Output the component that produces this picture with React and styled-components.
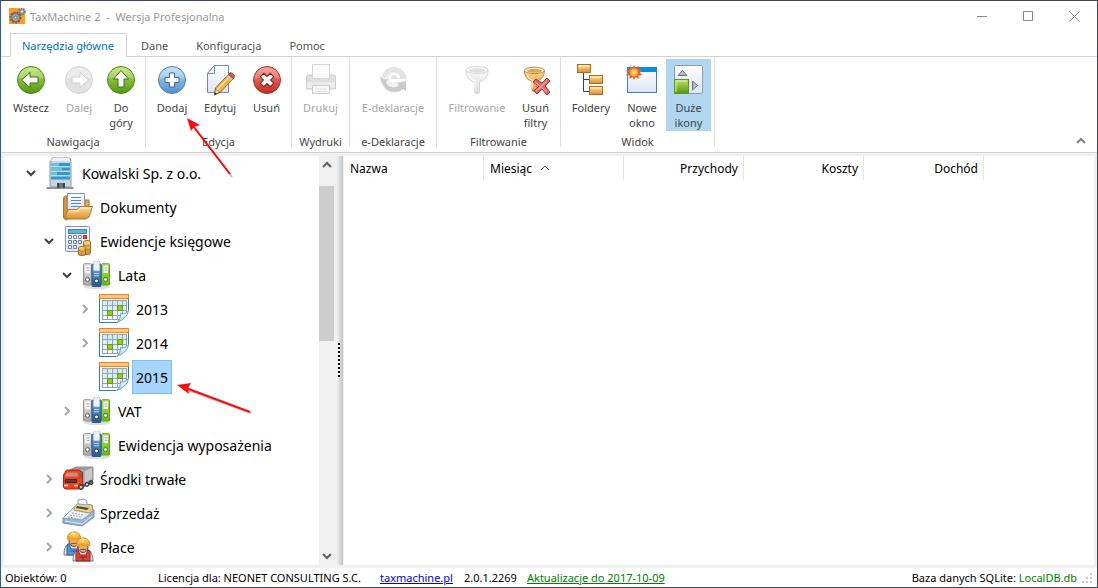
import React, { useState } from "react";
import styled, { createGlobalStyle } from "styled-components";

const groups = [
  {
    name: "Nawigacja",
    items: [
      { text: "Wstecz", icon: "back", w: 54 },
      { text: "Dalej", icon: "next", w: 42, off: true },
      { text: "Do góry", icon: "up", w: 42 },
    ],
  },
  {
    name: "Edycja",
    items: [
      { text: "Dodaj", icon: "add", w: 46 },
      { text: "Edytuj", icon: "edit", w: 50 },
      { text: "Usuń", icon: "remove", w: 43 },
    ],
  },
  { name: "Wydruki", items: [{ text: "Drukuj", icon: "print", w: 51, off: true }] },
  { name: "e-Deklaracje", items: [{ text: "E-deklaracje", icon: "edek", w: 80, off: true }] },
  {
    name: "Filtrowanie",
    items: [
      { text: "Filtrowanie", icon: "filter", w: 74, off: true },
      { text: "Usuń filtry", icon: "unfilter", w: 43 },
    ],
  },
  {
    name: "Widok",
    items: [
      { text: "Foldery", icon: "folders", w: 54 },
      { text: "Nowe okno", icon: "newWindow", w: 48 },
      { text: "Duże ikony", icon: "bigIcons", w: 45, on: true },
    ],
  },
];

const nodes = [
  { text: "Kowalski Sp. z o.o.", icon: "building", level: 0, open: true },
  { text: "Dokumenty", icon: "docs", level: 1 },
  { text: "Ewidencje księgowe", icon: "calc", level: 1, open: true },
  { text: "Lata", icon: "binders", level: 2, open: true },
  { text: "2013", icon: "calendar", level: 3, open: false },
  { text: "2014", icon: "calendar", level: 3, open: false },
  { text: "2015", icon: "calendar", level: 3 },
  { text: "VAT", icon: "binders", level: 2, open: false },
  { text: "Ewidencja wyposażenia", icon: "binders", level: 2 },
  { text: "Środki trwałe", icon: "truck", level: 1, open: false },
  { text: "Sprzedaż", icon: "register", level: 1, open: false },
  { text: "Płace", icon: "workers", level: 1, open: false },
];

const columns = [
  { text: "Nazwa", w: 140 },
  { text: "Miesiąc", w: 140, sorted: true },
  { text: "Przychody", w: 120, right: true },
  { text: "Koszty", w: 120, right: true },
  { text: "Dochód", w: 120, right: true },
];

const tabs = ["Narzędzia główne", "Dane", "Konfiguracja", "Pomoc"];

const ARROW = "M6.5 16l8.5-7.5v4.5h8v6h-8v4.5z";

const funnel = (fill, line, inner) => (
  <>
    <path
      d="M5 6c0 7 3 10 8.500 12v10c0 2 5 2 5 0V18C24 16 27 13 27 6z"
      fill={fill}
      stroke={line}
    />
    <ellipse cx="16" cy="6" rx="11" ry="3.500" fill="#fff" stroke={line} />
    <ellipse cx="16" cy="6.500" rx="8.500" ry="2.200" fill={inner} />
    <path d="M8 12c1 2 3 4 6 5v9" stroke="#fff" strokeWidth="1.500" opacity=".7" fill="none" />
  </>
);

const binder = (x, fill, dark) => (
  <>
    <rect x={x} y="4" width="8" height="23" rx="1" fill={fill} stroke={dark} />
    <rect x={x + 2} y="6" width="4.500" height="8" fill="#fff" />
    <path d={`M${x + 3} 8.500h3M${x + 3} 11h3`} stroke="#99a" />
    <circle cx={x + 4} cy="21" r="2" fill="#fff" stroke="#555" />
  </>
);

const worker = (x, y, cloth, dark) => (
  <g transform={`translate(${x} ${y})`}>
    <path d="M0 23c0-7 2-11 6-12h7c4 1 7 5 7 12z" fill="#e4e0e0" stroke="#777" />
    <path d="M5 12l2 5h6l2-5 2 1v10H3V13z" fill={cloth} stroke={dark} />
    <path d="M6 19h8M10 19v4" stroke={dark} fill="none" />
    <ellipse cx="10" cy="9" rx="5" ry="5.500" fill="#e9a878" stroke="#6e4330" />
    <path d="M7 12c2-1 4-1 6 0" stroke="#7a4528" fill="none" />
    <path d="M3.500 7c0-5 3-7 6.500-7s6.500 2 6.500 7z" fill="url(#helmet)" stroke="#c17c10" />
    <path d="M3 6h14v2H3z" fill="#f0a020" />
    <path d="M7 2l1-1h2v4" stroke="#fff8c8" fill="none" />
  </g>
);

const icons = {
  back: (
    <>
      <circle cx="16" cy="16" r="13.500" fill="url(#green)" stroke="#4c8a17" />
      <path d="M3.500 15a12.500 11.500 0 0125 0c-7-3-18-3-25 0z" fill="#fff" opacity=".22" />
      <path d={ARROW} fill="#fff" stroke="#3b7011" />
    </>
  ),
  next: (
    <>
      <circle cx="16" cy="16" r="13.500" fill="#e2e2e2" stroke="#d6d6d6" />
      <path d="M3.500 15a12.500 11.500 0 0125 0c-7-3-18-3-25 0z" fill="#fff" opacity=".35" />
      <path d={ARROW} transform="rotate(180 16 16)" fill="#fff" stroke="#cecece" />
    </>
  ),
  up: (
    <>
      <circle cx="16" cy="16" r="13.500" fill="url(#green)" stroke="#4c8a17" />
      <path d="M3.500 15a12.500 11.500 0 0125 0c-7-3-18-3-25 0z" fill="#fff" opacity=".22" />
      <path d={ARROW} transform="rotate(90 16 16)" fill="#fff" stroke="#3b7011" />
    </>
  ),
  add: (
    <>
      <circle cx="16" cy="16" r="13.500" fill="url(#blue)" stroke="#4c83bb" />
      <path d="M3.500 15a12.500 11.500 0 0125 0c-7-3-18-3-25 0z" fill="#fff" opacity=".25" />
      <path d="M13.500 9h5v4.500H23v5h-4.500V23h-5v-4.500H9v-5h4.500z" fill="#fff" stroke="#356ca4" />
    </>
  ),
  remove: (
    <>
      <circle cx="16" cy="16" r="13.500" fill="url(#red)" stroke="#a83228" />
      <path d="M3.500 15a12.500 11.500 0 0125 0c-7-3-18-3-25 0z" fill="#fff" opacity=".2" />
      <path
        d="M13.500 9h5v4.500H23v5h-4.500V23h-5v-4.500H9v-5h4.500z"
        transform="rotate(45 16 16)"
        fill="#fff"
        stroke="#8a1a14"
      />
    </>
  ),
  edit: (
    <>
      <path d="M10.500 1.500h14v27h-21v-19z" fill="url(#paper)" stroke="#6a8bbd" />
      <path d="M10.500 1.500v8h-7z" fill="#fff" stroke="#6a8bbd" />
      <path d="M24.500 10.500l5 4-13 13.500-6 3 1-7z" fill="#f2b14a" stroke="#9c6119" />
      <path d="M26 12L13 26" stroke="#ffe2a0" strokeWidth="1.500" />
      <path d="M24.500 10.500l1.500-1.500c1-1 5 2 4.500 3.500l-1 2z" fill="#e2584a" stroke="#a13a2a" />
      <path d="M23 12l5 4" stroke="#c4c8d0" strokeWidth="2" />
      <path d="M11.500 25l4 3-5 3z" fill="#f7dfb5" stroke="#7a4c18" strokeWidth=".6" />
      <path d="M11 28.500l2 1-2.800 1.800z" fill="#222" />
    </>
  ),
  print: (
    <>
      <path d="M3 11h26c1 0 1.500 1 1.500 2v12h-29V13c0-1 .5-2 1.500-2z" fill="#dedede" stroke="#cdcdcd" />
      <rect x="7.500" y="0.500" width="17" height="14" fill="#fbfbfb" stroke="#d6d6d6" />
      <path d="M2 18h28v6H2z" fill="#ececec" />
      <path d="M7.500 21.500h17v8h-17z" fill="#f9f9f9" stroke="#cacaca" />
      <path d="M10 25h12M10 27.500h12" stroke="#dedede" />
    </>
  ),
  edek: (
    <>
      <circle cx="17" cy="16" r="13" fill="#f1f1f1" />
      <path d="M5 13C7 6 11 3 17 3c6 0 12 4 12 12H13c0-2 2-4 5-4 2 0 3 1 4 2-1-4-3-5-6-5-4 0-7 3-8 7z" fill="#e3e3e3" />
      <path d="M13 15h16v3H13z" fill="#fff" />
      <path d="M12 15c0-4 3-6 6-6s5 2 5 5h-3c0-2-1-3-3-3s-3 2-3 4z" fill="#fff" />
      <path d="M3 12c2 3 5 4 8 3l-2 3c2 6 9 7 13 3l-2-2 9-2v10l-3-2C18 31 5 28 3 12z" fill="#cbcbcb" />
    </>
  ),
  filter: funnel("url(#pale)", "#d6d6d6", "#dedede"),
  unfilter: (
    <>
      <g transform="translate(0 1) scale(.9)">{funnel("url(#brass)", "#b57a24", "#dca456")}</g>
      <path
        d="M13 18l3-3 6 4 5-5 3 3-5 5 5 6-3 3-5-6-5 5-3-3 5-5z"
        fill="#df6460"
        stroke="#ae3333"
      />
      <path d="M15 18l12 10M27 17L16 27" stroke="#f3a29c" strokeWidth="1.200" />
    </>
  ),
  folders: (
    <>
      <path d="M8.500 9v18.500H15M8.500 15.500H15" fill="none" stroke="#3b3f55" />
      <rect x="2.500" y="0.500" width="13" height="8" fill="url(#gold)" stroke="#ad6d1d" />
      <rect x="14.500" y="11.500" width="13" height="8" fill="url(#gold)" stroke="#ad6d1d" />
      <rect x="14.500" y="22.500" width="13" height="8" fill="url(#gold)" stroke="#ad6d1d" />
      <path d="M4 2h10M16 13h10M16 24h10" stroke="#fff0c0" />
    </>
  ),
  newWindow: (
    <>
      <rect x="1.500" y="3.500" width="29" height="25" fill="url(#paper)" stroke="#3a7fc0" />
      <rect x="1" y="3" width="30" height="5" fill="#0a8de4" />
      <path
        d="M8 1l1.500 3L12.500 2v3.500l3.500.5-2 2.500 2 2.500-3.500.5v3.500l-3-2L8 16l-1.500-3-3 2v-3.500L0 11l2-2.500L0 6l3.500-.5V2l3 2z"
        fill="#ee5930"
      />
      <circle cx="8" cy="8.500" r="4" fill="#ffb52b" />
      <circle cx="8" cy="8.500" r="2" fill="#ffe67a" />
    </>
  ),
  bigIcons: (
    <>
      <rect x="1.500" y="1.500" width="28" height="28" rx="1" fill="url(#paper)" stroke="#8c9aab" />
      <path d="M9.500 6.500l4.500 5H5z" fill="#b7c1cd" stroke="#66717f" />
      <path d="M19.500 17v9l5-4.500z" fill="#b7c1cd" stroke="#66717f" />
      <rect x="1.500" y="15.500" width="14" height="14" fill="url(#green)" stroke="#5c9520" />
      <path d="M3 28V17h11" fill="none" stroke="#d8f1a4" />
    </>
  ),
  building: (
    <g transform="translate(1 0)">
      <path d="M1 30h26l1 2H0z" fill="#8b9299" />
      <path d="M4 4h2V1h18l1 3v26H4z" fill="#c9d4dc" stroke="#8d9ba8" />
      <path d="M7 1h16l1 3H5z" fill="#edf2f5" />
      <path d="M5 6h19v3H5zM5 10.500h19v3H5zM5 15h19v3H5zM5 19.500h19v3H5z" fill="#2c9bcd" />
      <path d="M5 6h8v3H5zM5 10.500h11v3H5zM5 15h6v3H5z" fill="#64c4e6" />
      <rect x="11" y="26" width="8" height="5" fill="#3b4650" />
      <path d="M14 26v5M16 26v5" stroke="#93a5b2" />
    </g>
  ),
  docs: (
    <g transform="translate(0 1)">
      <path d="M.5 6c0-1 1-2 2-2h3l2 2v19l-4 3-3-2z" fill="#d69137" stroke="#b3752a" />
      <path d="M22 8h4v9h-4z" fill="#e5a74f" stroke="#b3752a" />
      <path d="M4.500 1.500h17v17h-17z" fill="url(#paper)" stroke="#7998c5" />
      <path d="M8 5.500h10M8 8.500h10M8 11.500h10M8 14.500h10" stroke="#5a85c3" />
      <path d="M1.500 27L5 17.500h9l3-3h12.500L26 25l-3 2z" fill="url(#gold)" stroke="#b57426" />
      <path d="M6 19h9l3-3h10" stroke="#fff0c2" fill="none" />
    </g>
  ),
  calc: (
    <>
      <rect x="2.500" y="1.500" width="24" height="25" rx="1" fill="url(#paper)" stroke="#8094b4" />
      <rect x="5.500" y="4.500" width="18" height="4" fill="#65b0de" stroke="#4283b4" />
      <path
        d="M5.500 10.500h3v3h-3zM10.500 10.500h3v3h-3zM15.500 10.500h3v3h-3zM5.500 15.500h3v3h-3zM10.500 15.500h3v3h-3zM15.500 15.500h3v3h-3zM5.500 20.500h3v3h-3zM10.500 20.500h3v3h-3z"
        fill="#fff"
        stroke="#6884ad"
      />
      <rect x="20.500" y="10.500" width="3" height="3" fill="#e85040" stroke="#b42f25" />
      <path d="M20.500 17c0-2 7-2 7 0v11c0 2-7 2-7 0z" fill="url(#coin)" stroke="#a66c1c" />
      <path d="M15.500 23c0-2 7-2 7 0v6c0 2-7 2-7 0z" fill="url(#coin)" stroke="#a66c1c" />
      <path d="M16 25.500c1 1 5 1 6 0M21 20c1 1 5 1 6 0M21 24c2 1 5 1 6 0" stroke="#b97820" fill="none" />
    </>
  ),
  binders: (
    <g transform="translate(2 1)">
      <ellipse cx="14" cy="27" rx="13" ry="2" fill="#bbb" opacity=".5" />
      <g transform="scale(1 .93)">
        {binder(0.5, "url(#steel)", "#8f8f8f")}
        {binder(18.5, "url(#lime)", "#55a30e")}
        <path d="M10 5l1-4 3 1 2-1 2 4z" fill="#f3f4f7" stroke="#aab3c5" />
        <rect x="9" y="4.500" width="9" height="24" rx="1" fill="url(#navy)" stroke="#29578f" />
        <path d="M10.500 1.500h6v10h-6z" fill="#eef1f6" />
        <path d="M11 14.500h5M11 17h5" stroke="#b8d3ef" />
        <circle cx="13.500" cy="22.500" r="2" fill="#fff" stroke="#1a3557" />
      </g>
    </g>
  ),
  calendar: (
    <>
      <path d="M.5 4.500h29V21l-8 8.500H.5z" fill="#fff" stroke="#2481b6" />
      <rect x=".5" y="1.500" width="29" height="4" fill="#ffc988" stroke="#ef8418" />
      <rect x="3" y="8" width="24" height="18" fill="url(#sky)" />
      <path
        d="M3.500 7.500v19M8.500 7.500v19M13.500 7.500v19M18.500 7.500v19M23.500 7.500v19M27.500 7.500v15M3 7.500h25M3 12.500h25M3 17.500h25M3 22.500h25M3 26.500h18"
        stroke="#9ba3a7"
      />
      <path d="M18.500 12.500h5v5h-5zM8.500 17.500h5v5h-5z" fill="#97cf0a" stroke="#64962a" />
      <path d="M17 30l13-13v13z" fill="#fff" />
      <path d="M17.500 29.500c3-2 4-5 4-9 2 1 6 0 8-3-1 6-6 10-12 12z" fill="url(#curl)" stroke="#629fc5" />
    </>
  ),
  truck: (
    <>
      <path d="M14 25l7-1 9-4v-3H14z" fill="#555" />
      <path d="M7 7l6-3h17v13l-8 4-15-4z" fill="#b4b5b6" stroke="#8b8d8f" />
      <path d="M7 7l6-3h17l-9 3z" fill="#97999b" />
      <path d="M21 7.500l8.500-3v12l-8.500 4z" fill="#c8c9ca" stroke="#98999b" />
      <path d="M.5 12l3-5h12l4 2v15l-4 2H2l-1.500-2z" fill="#f0411f" stroke="#b4220f" />
      <path d="M3.500 9.500h11l.5 4H2z" fill="#d08a80" />
      <path d="M16.500 10h2.500v5h-2.500z" fill="#8a5a58" />
      <path d="M2 16h12v4H2z" fill="#3b2c2e" />
      <path d="M3 18h10" stroke="#8d4a42" />
      <path d="M1 22.500h4M11 22.500h4" stroke="#ffe9a0" strokeWidth="1.500" />
      <circle cx="18" cy="24" r="2.500" fill="#666" stroke="#333" />
      <circle cx="24" cy="21.500" r="2" fill="#666" stroke="#333" />
      <circle cx="28" cy="19.500" r="2" fill="#666" stroke="#333" />
      <circle cx="18" cy="24" r="1" fill="#ddd" />
      <circle cx="24" cy="21.500" r="1" fill="#ddd" />
    </>
  ),
  register: (
    <>
      <path d="M0 21v5l19 3 12-9v-7z" fill="#9cb4d4" stroke="#6f8cb3" />
      <path d="M0 21l11-11 19 2 1 2-12 9z" fill="#e3eaf5" stroke="#8ba1ba" />
      <path d="M11 11l4-5 14 2 1 6-4 2-15-3z" fill="#e6cd92" stroke="#a8935f" />
      <path d="M14 9l12 2-2 2-11-2z" fill="#4d512f" />
      <path d="M15 7V3l6-1 3 2v4z" fill="#eef3fa" stroke="#8ca4c4" />
      <path d="M9 15l11 2M7 17l11 2M5 19l11 2" stroke="#fff" strokeWidth="1.500" />
      <path d="M9 16l11 2M7 18l11 2M5 20l11 2" stroke="#8d9cb4" strokeDasharray="2 1" />
      <path d="M2 24l17 3 10-8" fill="none" stroke="#dce8f5" />
    </>
  ),
  workers: (
    <>
      {worker(1, 1, "#4e98db", "#28639e")}
      {worker(10, 7, "#d9433e", "#8f211e")}
    </>
  ),
};

function Defs() {
  const grads = [
    ["green", "#c0e46a", "#539512"],
    ["blue", "#b9daf4", "#538fcb"],
    ["red", "#ef9086", "#c12a21"],
    ["gold", "#ffe3a0", "#dc8e2d"],
    ["brass", "#ffd98c", "#dd9830"],
    ["pale", "#f7f7f7", "#dddddd"],
    ["helmet", "#ffe27a", "#f3a41c"],
    ["paper", "#ffffff", "#dce5f4"],
    ["sky", "#c6ecff", "#f4fbff"],
    ["navy", "#78aadd", "#245892"],
    ["steel", "#e8e8e8", "#a9a9a9"],
    ["lime", "#a5e35a", "#62bd12"],
    ["coin", "#f7d88b", "#c98a30"],
    ["curl", "#ffffff", "#a9d8f2"],
  ];
  return (
    <DefsSvg aria-hidden="true">
      <defs>
        {grads.map(([id, a, b]) => (
          <linearGradient key={id} id={id} x1="0" y1="0" x2="0" y2="1">
            <stop offset="0" stopColor={a} />
            <stop offset="1" stopColor={b} />
          </linearGradient>
        ))}
      </defs>
    </DefsSvg>
  );
}

const Icon = ({ name }) => (
  <IconSvg viewBox="0 0 32 32" aria-hidden="true">
    {icons[name]}
  </IconSvg>
);

const Chevron = ({ dir = "down", size = 10, color = "#404040", thick = 2 }) => {
  const turn = { down: 0, up: 180, right: -90 }[dir];
  return (
    <svg width={size} height={size} viewBox="0 0 10 10" aria-hidden="true">
      <path
        d="M1 3l4 4 4-4"
        transform={`rotate(${turn} 5 5)`}
        fill="none"
        stroke={color}
        strokeWidth={thick}
      />
    </svg>
  );
};

function App() {
  const [tab, setTab] = useState(tabs[0]);
  const [selected, setSelected] = useState("2015");

  return (
    <Window>
      <Global />
      <Defs />
      <TitleBar>
        <Logo viewBox="0 0 17 17" aria-hidden="true">
          <path d="M0 0h11v3h5v13H0z" fill="#ff9d1e" />
          <circle cx="6.500" cy="9.500" r="5" fill="#999" stroke="#606468" strokeWidth="2" strokeDasharray="2 1" />
          <circle cx="6.500" cy="9.500" r="4" fill="#a8a8a8" stroke="#666" />
          <circle cx="6.500" cy="9.500" r="1.500" fill="#eee" stroke="#666" />
          <circle cx="13" cy="3.500" r="3" fill="#999" stroke="#6d7175" strokeWidth="1.500" strokeDasharray="1.500 1" />
          <circle cx="13" cy="3.500" r="1" fill="#fff" />
        </Logo>
        <Title>{"TaxMachine 2  -  Wersja Profesjonalna"}</Title>
        <WinButton aria-label="Minimalizuj">
          <svg width="11" height="11"><path d="M0 5.500h10" stroke="#8c8c8c" /></svg>
        </WinButton>
        <WinButton aria-label="Maksymalizuj">
          <svg width="11" height="11"><path d="M.5.500h9v9h-9z" fill="none" stroke="#8c8c8c" /></svg>
        </WinButton>
        <WinButton aria-label="Zamknij">
          <svg width="11" height="11"><path d="M.5.500l10 10M10.500.500l-10 10" stroke="#8c8c8c" /></svg>
        </WinButton>
      </TitleBar>

      <Tabs>
        {tabs.map((t) => (
          <Tab key={t} $active={t === tab} onClick={() => setTab(t)}>{t}</Tab>
        ))}
      </Tabs>

      <Ribbon>
        {groups.map((g) => (
          <Group key={g.name}>
            <Tools>
              {g.items.map((b) => (
                <Tool key={b.text} $w={b.w} $on={b.on} disabled={b.off}>
                  <Icon name={b.icon} />
                  <span>{b.text}</span>
                </Tool>
              ))}
            </Tools>
            <GroupName>{g.name}</GroupName>
          </Group>
        ))}
        <Collapse aria-label="Zwiń wstążkę">
          <Chevron dir="up" color="#808080" />
        </Collapse>
      </Ribbon>

      <Main>
        <Tree>
          {nodes.map((n) => (
            <Row key={n.text} $level={n.level}>
              <Toggle>
                {n.open !== undefined && (
                  <Chevron dir={n.open ? "down" : "right"} color={n.open ? "#404040" : "#a6a6a6"} />
                )}
              </Toggle>
              <Icon name={n.icon} />
              <Label $selected={n.text === selected} onClick={() => setSelected(n.text)}>
                {n.text}
              </Label>
            </Row>
          ))}
        </Tree>
        <ScrollBar>
          <ScrollButton aria-label="W górę"><Chevron dir="up" color="#606060" /></ScrollButton>
          <Track><Thumb /></Track>
          <ScrollButton aria-label="W dół"><Chevron color="#606060" /></ScrollButton>
        </ScrollBar>
        <Splitter>
          <Grip />
        </Splitter>
        <ListPane>
          <Table>
            <thead>
              <tr>
                {columns.map((c) => (
                  <Th key={c.text} $w={c.w} $right={c.right}>
                    {c.text}
                    {c.sorted && <Sort><Chevron dir="up" color="#606060" thick={1} /></Sort>}
                  </Th>
                ))}
              </tr>
            </thead>
          </Table>
        </ListPane>
      </Main>

      <Status>
        <Count>Obiektów: 0</Count>
        <Licence>Licencja dla: NEONET CONSULTING S.C.</Licence>
        <Site href="#site">taxmachine.pl</Site>
        <Version>2.0.1.2269</Version>
        <Updates href="#updates">Aktualizacje do 2017-10-09</Updates>
        <Base>Baza danych SQLite: <b>LocalDB.db</b></Base>
        <Sizer width="12" height="12" aria-hidden="true">
          <path
            d="M9 1h2v2H9zM5 5h2v2H5zM9 5h2v2H9zM1 9h2v2H1zM5 9h2v2H5zM9 9h2v2H9z"
            fill="#c9c9c9"
          />
        </Sizer>
      </Status>

      <Pointers viewBox="0 0 260 420" aria-hidden="true">
        <g opacity=".25" transform="translate(2 2)" fill="#000" stroke="#000">
          <path d="M193 126l37 49M186 388l63 23" strokeWidth="2" />
        </g>
        <path d="M193 126l37 48M186 388l64 24" stroke="#fb0d0d" strokeWidth="2" />
        <path d="M187 118l4 13 3-4 6-2zM177 385l14-2-3 5 1 6z" fill="#fb0d0d" />
      </Pointers>
    </Window>
  );
}

export default App;

const Global = createGlobalStyle`
  * { box-sizing: border-box; }
  body {
    margin: 0;
    font-family: "Noto Sans", "Open Sans", sans-serif;
    font-size: 11px;
    color: #000;
  }
  button {
    font: inherit;
    padding: 0;
    border: 0;
    background: none;
  }
`;

const Window = styled.div`
  position: relative;
  display: flex;
  flex-direction: column;
  min-height: 100vh;
  overflow: hidden;
  border: 1px solid #3c4654;
  border-left-color: #2f5f8b;
  background: #fff;
`;

const DefsSvg = styled.svg`
  position: absolute;
  width: 0;
  height: 0;
`;

const IconSvg = styled.svg`
  flex: none;
  width: 32px;
  height: 32px;
  overflow: visible;
`;

const TitleBar = styled.header`
  display: flex;
  align-items: center;
  height: 30px;
  padding-left: 8px;
`;

const Logo = styled.svg`
  width: 17px;
  height: 17px;
`;

const Title = styled.div`
  flex: 1;
  padding-left: 4px;
  white-space: pre;
  color: #999;
`;

const WinButton = styled.button`
  display: flex;
  align-items: center;
  justify-content: center;
  width: 46px;
  height: 30px;
`;

const Tabs = styled.nav`
  display: flex;
  align-items: flex-end;
  height: 25px;
  padding-left: 9px;
`;

const Tab = styled.button`
  position: relative;
  height: 24px;
  margin-bottom: -1px;
  padding: 0 ${(p) => (p.$active ? "12px 0 11px" : "13px")};
  border: 1px solid ${(p) => (p.$active ? "#d2d2d2" : "transparent")};
  border-bottom: 0;
  background: ${(p) => (p.$active ? "#fff" : "transparent")};
  color: ${(p) => (p.$active ? "#0072c6" : "#505050")};
`;

const Ribbon = styled.div`
  display: flex;
  height: 97px;
  padding-bottom: 2px;
  border-top: 1px solid #d2d2d2;
  border-bottom: 1px solid #d2d2d2;
`;

const Group = styled.section`
  display: flex;
  flex-direction: column;
  align-items: center;
  padding: 2px 3px 0;
  border-right: 1px solid #e1e1e1;
  margin-bottom: 3px;
`;

const Tools = styled.div`
  display: flex;
`;

const Tool = styled.button`
  display: flex;
  flex-direction: column;
  align-items: center;
  gap: 4px;
  width: ${(p) => p.$w}px;
  height: 72px;
  padding: 5px 4px 0;
  line-height: 15px;
  color: #444;
  background: ${(p) => (p.$on ? "#b1d6f0" : "none")};
  &:disabled {
    color: #a6a6a6;
  }
`;

const GroupName = styled.div`
  padding-top: 2px;
  line-height: 18px;
  white-space: nowrap;
  color: #444;
`;

const Collapse = styled.button`
  align-self: flex-end;
  margin-left: auto;
  width: 32px;
  height: 18px;
`;

const Main = styled.main`
  display: flex;
  flex: 1;
  padding: 3px;
  background: #f0f0f0;
`;

const Tree = styled.div`
  width: 315px;
  height: 409px;
  min-height: 100%;
  overflow: hidden;
  background: #fff;
`;

const Row = styled.div`
  display: flex;
  align-items: center;
  height: 34px;
  padding-left: ${(p) => 18 + p.$level * 18}px;
`;

const Toggle = styled.span`
  display: flex;
  justify-content: center;
  width: 18px;
  margin-right: 5px;
`;

const Label = styled.button`
  height: 34px;
  margin-left: 1px;
  padding: 0 3px;
  font-size: 14px;
  white-space: nowrap;
  border: 1px solid ${(p) => (p.$selected ? "#7cbdfa" : "transparent")};
  background: ${(p) => (p.$selected ? "#a8d5ff" : "none")};
`;

const ScrollBar = styled.div`
  display: flex;
  flex-direction: column;
  width: 15px;
`;

const ScrollButton = styled.button`
  display: flex;
  align-items: center;
  justify-content: center;
  height: 18px;
`;

const Track = styled.div`
  flex: 1;
  padding-top: 12px;
`;

const Thumb = styled.div`
  height: 43%;
  background: #cdcdcd;
`;

const Splitter = styled.div`
  display: flex;
  align-items: center;
  width: 7px;
  margin: 0 1px 0 2px;
  padding-left: 2px;
  background: linear-gradient(to right, #f6f6f6, #c3c3c3);
`;

const Grip = styled.div`
  width: 2px;
  height: 35px;
  background: repeating-linear-gradient(#000 0 2px, #fff 2px 4px);
`;

const ListPane = styled.div`
  flex: 1;
  background: #fff;
`;

const Table = styled.table`
  border-spacing: 0;
  table-layout: fixed;
  width: 640px;
  font-size: 12px;
`;

const Th = styled.th`
  width: ${(p) => p.$w}px;
  height: 24px;
  padding: 0 5px 0 6px;
  border-right: 1px solid #e5e5e5;
  font-weight: normal;
  text-align: ${(p) => (p.$right ? "right" : "left")};
`;

const Sort = styled.span`
  margin-left: 8px;
`;

const Status = styled.footer`
  display: flex;
  align-items: center;
  height: 19px;
  padding: 0 4px;
  white-space: nowrap;
`;

const Count = styled.span`
  width: 153px;
`;

const Licence = styled.span`
  width: 222px;
`;

const Site = styled.a`
  width: 84px;
  color: #0000e6;
`;

const Version = styled.span`
  width: 63px;
`;

const Updates = styled.a`
  color: #008000;
`;

const Base = styled.span`
  margin-left: auto;
  b {
    font-weight: normal;
    color: #008000;
  }
`;

const Sizer = styled.svg`
  margin-left: 4px;
`;

const Pointers = styled.svg`
  position: absolute;
  top: -1px;
  left: -1px;
  width: 260px;
  height: 420px;
  pointer-events: none;
`;
